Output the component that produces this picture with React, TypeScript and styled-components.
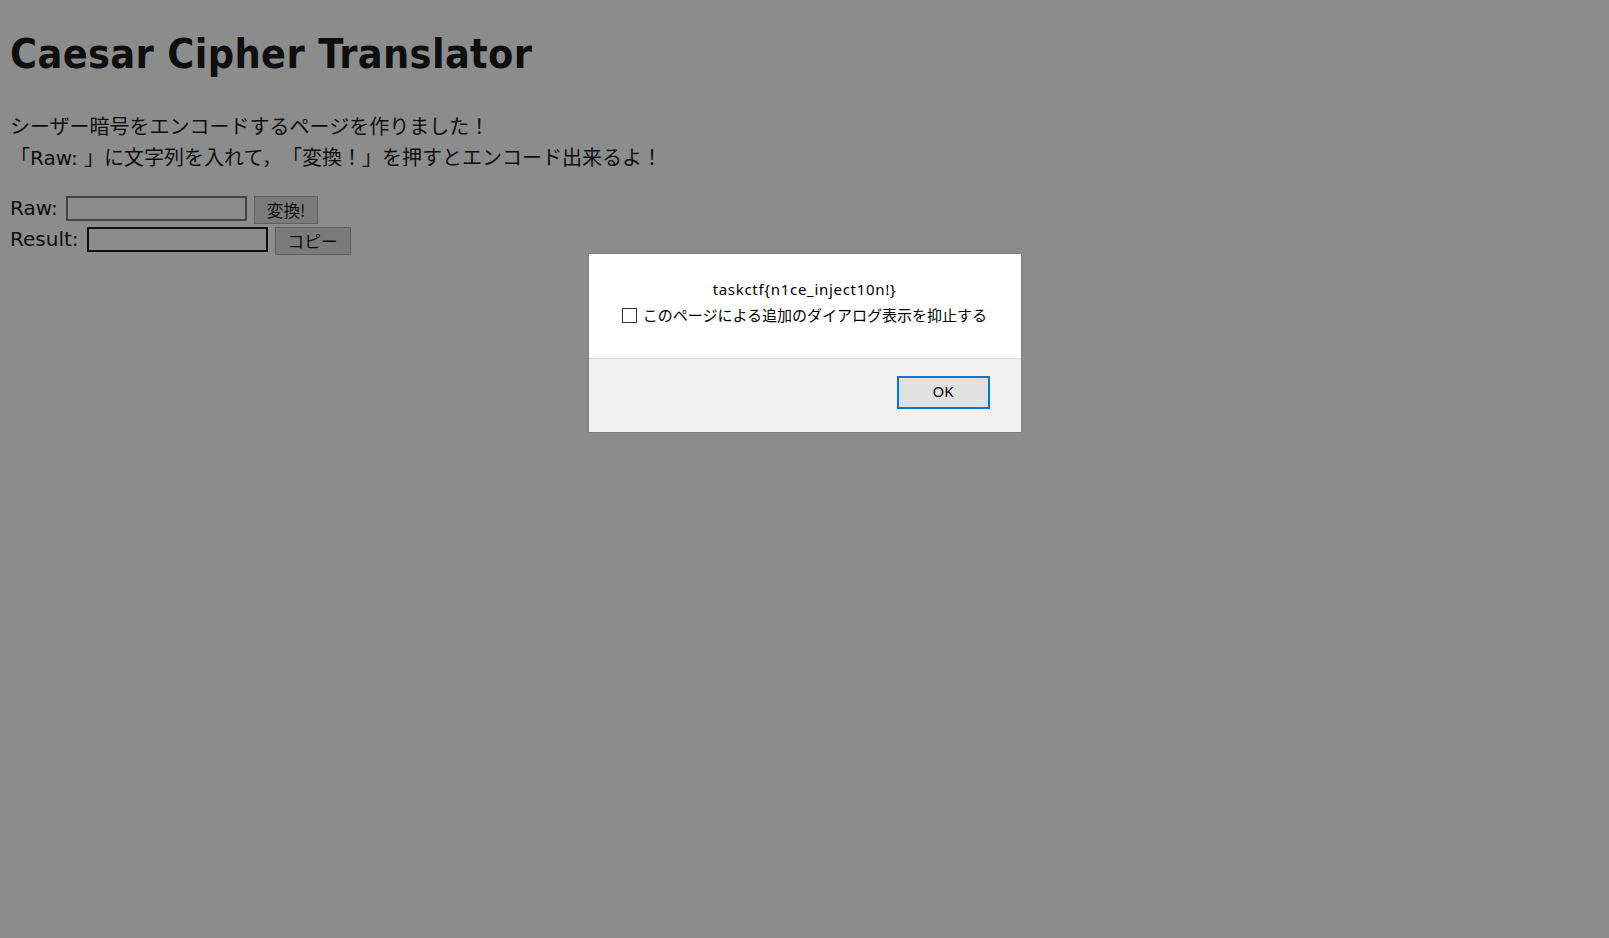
import styled, { createGlobalStyle } from "styled-components";

const GlobalStyle = createGlobalStyle`
  html, body {
    margin: 0;
    padding: 0;
    background: #fff;
  }
  body {
    font-family: "DejaVu Sans", "Noto Sans CJK JP", sans-serif;
    color: #1a1a1a;
    text-spacing-trim: space-all;
  }
`;

const Page = styled.div`
  min-height: 938px;
  box-sizing: border-box;
  padding: 29px 10px 0;
`;

const Title = styled.h1`
  margin: 0;
  font-family: "DejaVu Sans Condensed", "DejaVu Sans", sans-serif;
  font-size: 41px;
  line-height: 50px;
  letter-spacing: 0.35px;
  font-weight: bold;
`;

const Intro = styled.p`
  margin: 33px 0 0;
  font-size: 20px;
  line-height: 31px;
  text-spacing-trim: space-all;
`;

const Form = styled.div`
  margin-top: 22px;
  display: flex;
  flex-direction: column;
  gap: 3px;
`;

const Row = styled.div`
  display: flex;
  align-items: flex-start;
`;

const Label = styled.label`
  font-size: 20px;
  line-height: 25px;
`;

const TextInput = styled.input<{ $active?: boolean }>`
  margin-left: 8px;
  width: 181px;
  height: 25px;
  box-sizing: border-box;
  border: 2px solid ${(p) => (p.$active ? "#1c1c1c" : "#7c7c7c")};
  background: #fff;
  padding: 0 3px;
  outline: none;
`;

const Button = styled.button`
  margin-left: 7px;
  height: 28px;
  padding: 0 12px;
  box-sizing: border-box;
  border: 1px solid #adadad;
  background: #e1e1e1;
  color: #1a1a1a;
  font-family: "Noto Sans CJK JP", sans-serif;
  font-size: 16.7px;
  line-height: 26px;
`;

const Overlay = styled.div`
  position: fixed;
  inset: 0;
  background: rgba(0, 0, 0, 0.451);
  display: flex;
  justify-content: center;
  align-items: flex-start;
  padding-top: 253px;
`;

const Dialog = styled.div`
  width: 434px;
  box-sizing: border-box;
  border: 1px solid #7f7f7f;
  background: #fff;
  color: #000;
  font-family: "Noto Sans", "Noto Sans CJK JP", sans-serif;
  font-size: 15px;
`;

const DialogBody = styled.div`
  padding: 25px 0 33px;
  display: flex;
  flex-direction: column;
  align-items: center;
  gap: 6px;
`;

const Message = styled.div`
  line-height: 20px;
  letter-spacing: 0.7px;
`;

const CheckRow = styled.label`
  display: flex;
  align-items: center;
  gap: 6px;
  line-height: 20px;
`;

const CheckBox = styled.input`
  appearance: none;
  margin: 0;
  width: 15px;
  height: 15px;
  box-sizing: border-box;
  border: 1px solid #333;
  background: #fff;
`;

const DialogFooter = styled.div`
  border-top: 1px solid #dfdfdf;
  background: #f0f0f0;
  box-sizing: border-box;
  height: 74px;
  padding: 17px 31px 0 0;
  display: flex;
  justify-content: flex-end;
  align-items: flex-start;
`;

const OkButton = styled.button`
  width: 93px;
  height: 33px;
  box-sizing: border-box;
  border: 2px solid #0078d7;
  background: #e1e1e1;
  color: #000;
  font-family: "Noto Sans", sans-serif;
  font-size: 15px;
  line-height: 20px;
  padding: 0 0 3px;
`;

export default function App() {
  return (
    <>
      <GlobalStyle />
      <Page>
        <Title>Caesar Cipher Translator</Title>
        <Intro>
          シーザー暗号をエンコードするページを作りました！
          <br />
          「Raw: 」に文字列を入れて，「変換！」を押すとエンコード出来るよ！
        </Intro>
        <Form>
          <Row>
            <Label>Raw:</Label>
            <TextInput />
            <Button>変換!</Button>
          </Row>
          <Row>
            <Label>Result:</Label>
            <TextInput $active />
            <Button>コピー</Button>
          </Row>
        </Form>
      </Page>
      <Overlay>
        <Dialog>
          <DialogBody>
            <Message>taskctf{"{"}n1ce_inject10n!{"}"}</Message>
            <CheckRow>
              <CheckBox type="checkbox" />
              このページによる追加のダイアログ表示を抑止する
            </CheckRow>
          </DialogBody>
          <DialogFooter>
            <OkButton>OK</OkButton>
          </DialogFooter>
        </Dialog>
      </Overlay>
    </>
  );
}
